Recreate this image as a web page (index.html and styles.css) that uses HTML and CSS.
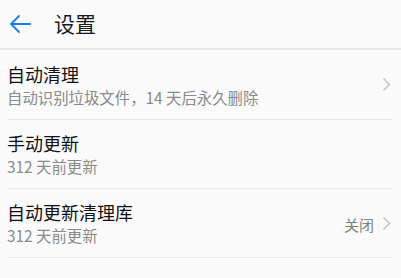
FILE: index.html
```html
<!DOCTYPE html>
<html lang="zh-CN">
<head>
<meta charset="utf-8">
<link rel="stylesheet" href="styles.css">
</head>
<body>
<header class="bar">
  <svg class="back" width="24" height="20" viewBox="0 0 24 20">
    <path d="M22 10H3M11 2L3 10L11 18" fill="none" stroke="#1a7cf0" stroke-width="1.8" stroke-linecap="round" stroke-linejoin="round"/>
  </svg>
  <h1 class="title">设置</h1>
</header>
<main class="list">
  <div class="row">
    <div class="text">
      <div class="main">自动清理</div>
      <div class="sub">自动识别垃圾文件，14 天后永久删除</div>
    </div>
    <svg class="chev" width="9" height="15" viewBox="0 0 9 15"><path d="M1.5 1.5L7.5 7.5L1.5 13.5" fill="none" stroke="#c4c4c4" stroke-width="1.5"/></svg>
  </div>
  <div class="row">
    <div class="text">
      <div class="main">手动更新</div>
      <div class="sub">312 天前更新</div>
    </div>
  </div>
  <div class="row">
    <div class="text">
      <div class="main">自动更新清理库</div>
      <div class="sub">312 天前更新</div>
    </div>
    <span class="value">关闭</span>
    <svg class="chev" width="9" height="15" viewBox="0 0 9 15"><path d="M1.5 1.5L7.5 7.5L1.5 13.5" fill="none" stroke="#c4c4c4" stroke-width="1.5"/></svg>
  </div>
</main>
</body>
</html>
```
FILE: styles.css
```css
html, body {
  margin: 0;
  padding: 0;
  background: #fafafa;
  font-family: "Noto Sans CJK SC", "Noto Sans", sans-serif;
  color: #1a1a1a;
}
.bar {
  height: 48px;
  display: flex;
  align-items: center;
  background: #fafafa;
  border-bottom: 2px solid #e6e6e6;
}
.back {
  margin-left: 8px;
  margin-right: 22px;
}
.title {
  margin: 0;
  font-size: 21px;
  font-weight: 400;
  line-height: 1;
  padding-bottom: 1px;
}
.list {
  padding: 0 8px 0 7px;
}
.row {
  display: flex;
  align-items: center;
  height: 68px;
  border-bottom: 1px solid #e8e8e8;
}
.row:first-child { height: 69px; }
.text {
  flex: 1;
  display: flex;
  flex-direction: column;
  gap: 2px;
}
.main {
  font-size: 18px;
  line-height: 22px;
  color: #111;
}
.sub {
  font-size: 15.4px;
  line-height: 20px;
  color: #8a8a8a;
}
.value {
  font-size: 15px;
  color: #808080;
  margin-right: 8px;
  margin-top: 2px;
}
.chev {
  margin-right: 2px;
}
```
